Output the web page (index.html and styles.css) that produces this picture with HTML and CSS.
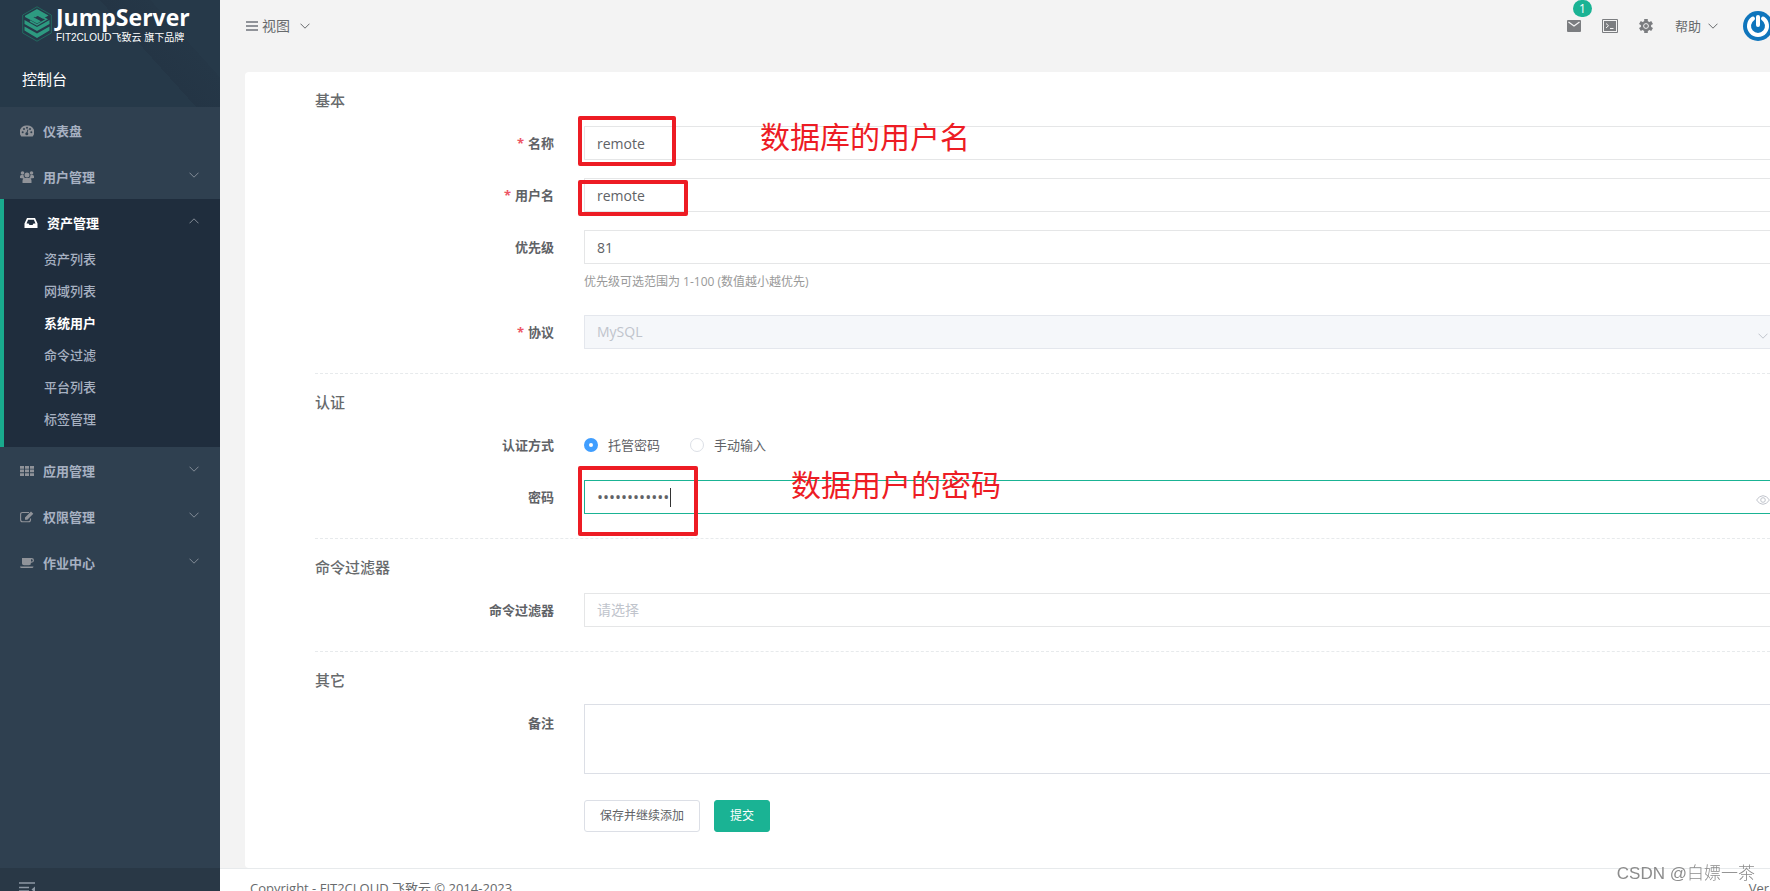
FILE: index.html
```
<!DOCTYPE html>
<html lang="zh-CN">
<head>
<meta charset="utf-8">
<title>JumpServer</title>
<link rel="stylesheet" href="styles.css">
</head>
<body>
<svg class="symbols" aria-hidden="true">
  <symbol id="chevron-down" viewBox="0 0 10 6"><path d="M.5 .7 5 5.2 9.5 .7" fill="none" stroke="currentColor"/></symbol>
  <symbol id="chevron-up" viewBox="0 0 10 6"><path d="M.5 5.3 5 .8 9.5 5.3" fill="none" stroke="currentColor"/></symbol>
</svg>
<div class="app">
  <aside class="sidebar">
    <header class="brand">
      <a class="logo" href="#">
        <svg class="logo-mark" viewBox="0 0 30 36">
          <path d="M15 .8 29.3 9v18L15 35.200 .7 27V9z" fill="none" stroke="#22695f"/>
          <path d="M15 3 26.500 9.500 21 12.700 15 9.400 11.500 11.300 19 15.300 15 17.600 3 11v-1.300z" fill="#2d9a80"/>
          <path d="M12.500 10.800 16 8.800 24.500 13.300 15 18.800 8 15" fill="none" stroke="#2d9a80" stroke-width="1.500"/>
          <path d="M2.500 14 15 21 27.500 14v4L15 25 2.500 18zM2.500 20.500 15 27.500 27.500 20.500v4L15 32 2.500 24.500z" fill="#2d9a80"/>
        </svg>
        <span class="logo-text">
          <strong class="logo-name">JumpServer</strong>
          <span class="logo-sub">FIT2CLOUD飞致云 旗下品牌</span>
        </span>
      </a>
      <div class="console">控制台</div>
    </header>
    <nav class="menu">
      <a class="item" href="#">
        <svg class="item-icon" viewBox="0 0 14 12"><path d="M7 .5A6.700 6.700 0 0 0 1.300 11.500h11.400A6.700 6.700 0 0 0 7 .5z" fill="currentColor"/><g fill="#2f4050"><circle cx="2.700" cy="7.300" r="1"/><circle cx="4" cy="4" r="1"/><circle cx="7" cy="2.700" r="1"/><circle cx="10" cy="4" r="1"/><circle cx="11.300" cy="7.300" r="1"/><circle cx="6.800" cy="8.700" r="1.500"/></g><path d="M6.800 8.500 7.900 4.500" stroke="#2f4050"/></svg>
        <span>仪表盘</span>
      </a>
      <a class="item" href="#">
        <svg class="item-icon" viewBox="0 0 14 12"><g fill="currentColor"><circle cx="2.500" cy="2" r="1.800"/><circle cx="11.500" cy="2" r="1.800"/><circle cx="7" cy="4" r="2.500"/><path d="M0 7V5.500Q0 4 1.300 4h2.200Q3.600 6 4.700 6.800L3.500 7.500zM14 7V5.500Q14 4 12.700 4h-2.200Q10.400 6 9.300 6.800l1.200.7zM2.500 12V9.500Q2.500 7 4.500 7h5q2 0 2 2.500V12z"/></g></svg>
        <span>用户管理</span>
        <svg class="arrow"><use href="#chevron-down"/></svg>
      </a>
      <div class="group">
        <a class="item item-open" href="#">
          <svg class="item-icon" viewBox="0 0 14 12"><path d="M3 1h8l2.500 5.500V11H.5V6.500zM4.100 2.800 2.500 6.500h2L5.500 8h3l1-1.500h2L9.900 2.800z" fill="currentColor" fill-rule="evenodd"/></svg>
          <span>资产管理</span>
          <svg class="arrow"><use href="#chevron-up"/></svg>
        </a>
        <div class="submenu">
          <a href="#">资产列表</a>
          <a href="#">网域列表</a>
          <a class="current" href="#">系统用户</a>
          <a href="#">命令过滤</a>
          <a href="#">平台列表</a>
          <a href="#">标签管理</a>
        </div>
      </div>
      <a class="item" href="#">
        <svg class="item-icon" viewBox="0 0 14 12"><path d="M0 1h4v2.700H0zM5 1h4v2.700H5zM10 1h4v2.700h-4zM0 4.600h4v2.700H0zM5 4.600h4v2.700H5zM10 4.600h4v2.700h-4zM0 8.200h4v2.700H0zM5 8.200h4v2.700H5zM10 8.200h4v2.700h-4z" fill="currentColor"/></svg>
        <span>应用管理</span>
        <svg class="arrow"><use href="#chevron-down"/></svg>
      </a>
      <a class="item" href="#">
        <svg class="item-icon" viewBox="0 0 14 12"><path d="M9 1.500H2.500Q.6 1.500.6 3.500v5.200q0 2 1.900 2h6q2 0 2-2V7.500" fill="none" stroke="currentColor" stroke-width="1.100"/><path d="M5 8.800V6.500L11 .6l2.300 2.200-6 6zM5.900 7l1 1" fill="currentColor"/></svg>
        <span>权限管理</span>
        <svg class="arrow"><use href="#chevron-down"/></svg>
      </a>
      <a class="item" href="#">
        <svg class="item-icon" viewBox="0 0 14 12"><path d="M2 1h9.500Q14 1 14 3.300T11.500 5.800H11Q11 8.300 9 8.300H4Q2 8.300 2 6.500zM11 2.200v2.400Q12.800 4.700 12.800 3.400T11 2.200zM0 9.500h13.500Q13.300 11 12 11H1.500Q.2 11 0 9.500z" fill="currentColor" fill-rule="evenodd"/></svg>
        <span>作业中心</span>
        <svg class="arrow"><use href="#chevron-down"/></svg>
      </a>
    </nav>
    <button class="collapse" type="button" aria-label="收起菜单">
      <svg viewBox="0 0 16 13"><path d="M0 1h16M0 5.500h10M0 9h10M0 12.300h16" stroke="currentColor" stroke-width="1.600"/><path d="M16 4.500v6l-3.500-3z" fill="currentColor"/></svg>
    </button>
  </aside>

  <main class="main">
    <header class="topbar">
      <button class="view-switch" type="button">
        <svg class="bars" viewBox="0 0 12 10"><path d="M0 1h12M0 5h12M0 9h12" stroke="#909399" stroke-width="2"/></svg>
        <span>视图</span>
        <svg class="arrow"><use href="#chevron-down"/></svg>
      </button>
      <div class="tools">
        <button class="tool mail" type="button" aria-label="消息">
          <svg width="14" height="12" viewBox="0 0 14 12"><rect width="14" height="12" rx="1" fill="#7b7d80"/><path d="M1.500 2 7 6 12.500 2" fill="none" stroke="#f3f3f3" stroke-width="1.300"/></svg>
          <span class="badge">1</span>
        </button>
        <button class="tool" type="button" aria-label="终端">
          <svg width="16" height="14" viewBox="0 0 16 14"><path d="M.5 .5h15v13H.5z" fill="none" stroke="#7b7d80"/><path d="M2 2h12v10H2z" fill="#7b7d80"/><path d="M4 4.500 6.500 6.700 4 9M8 9.500h3.500" fill="none" stroke="#f3f3f3"/></svg>
        </button>
        <button class="tool gear" type="button" aria-label="设置">
          <svg width="14" height="14" viewBox="0 0 14 14"><g stroke="#7b7d80" stroke-width="3.600"><path d="M7 0v14M.9 3.500l12.200 7M.9 10.500l12.200-7"/></g><circle cx="7" cy="7" r="5.200" fill="#7b7d80"/><circle cx="7" cy="7" r="2.400" fill="none" stroke="#f3f3f3"/></svg>
        </button>
        <button class="tool help" type="button"><span>帮助</span><svg class="arrow"><use href="#chevron-down"/></svg></button>
        <a class="avatar" href="#" aria-label="用户">
          <svg viewBox="0 0 30 30"><circle cx="15" cy="15" r="15" fill="#0f75bc"/><path d="M10 7.500A9 9 0 1 0 20 7.500" fill="none" stroke="#fff" stroke-width="4" stroke-linecap="round"/><path d="M15 6v8" stroke="#fff" stroke-width="4" stroke-linecap="round"/></svg>
        </a>
      </div>
    </header>

    <form class="panel">
      <section class="section">
        <h3>基本</h3>
        <div class="row">
          <label class="required" for="name">名称</label>
          <div class="field"><input class="control" id="name" type="text" value="remote">
            <span class="mark mark-name"></span><span class="note note-name">数据库的用户名</span></div>
        </div>
        <div class="row">
          <label class="required" for="username">用户名</label>
          <div class="field"><input class="control" id="username" type="text" value="remote"><span class="mark mark-user"></span></div>
        </div>
        <div class="row">
          <label for="priority">优先级</label>
          <div class="field"><input class="control" id="priority" type="text" value="81">
            <p class="hint">优先级可选范围为 1-100 (数值越小越优先)</p></div>
        </div>
        <div class="row">
          <label class="required" for="protocol">协议</label>
          <div class="field"><select class="control" id="protocol" disabled><option>MySQL</option></select>
            <svg class="suffix suffix-arrow"><use href="#chevron-down"/></svg></div>
        </div>
      </section>
      <section class="section">
        <h3>认证</h3>
        <div class="row" role="radiogroup" aria-labelledby="auth-label">
          <span class="label" id="auth-label">认证方式</span>
          <div class="field radios">
            <label class="radio"><input type="radio" name="auth" checked><span>托管密码</span></label>
            <label class="radio"><input type="radio" name="auth"><span>手动输入</span></label>
          </div>
        </div>
        <div class="row">
          <label for="password">密码</label>
          <div class="field"><input class="control active" id="password" type="password" value="remote123456">
            <span class="caret"></span>
            <svg class="suffix suffix-eye" viewBox="0 0 14 10"><path d="M.6 5Q3.200 .7 7 .7T13.400 5Q10.800 9.300 7 9.300T.6 5z" fill="none" stroke="currentColor"/><circle cx="7" cy="5" r="2.300" fill="none" stroke="currentColor"/></svg>
            <span class="mark mark-password"></span><span class="note note-password">数据用户的密码</span></div>
        </div>
      </section>
      <section class="section">
        <h3>命令过滤器</h3>
        <div class="row">
          <label for="filter">命令过滤器</label>
          <div class="field"><select class="control empty" id="filter"><option>请选择</option></select></div>
        </div>
      </section>
      <section class="section last">
        <h3>其它</h3>
        <div class="row">
          <label for="comment">备注</label>
          <div class="field"><textarea class="control" id="comment"></textarea></div>
        </div>
        <div class="actions">
          <button class="btn" type="button">保存并继续添加</button>
          <button class="btn btn-primary" type="submit">提交</button>
        </div>
      </section>
    </form>

    <footer class="footer"><span>Copyright - FIT2CLOUD 飞致云 © 2014-2023</span><span>Ver</span></footer>
  </main>
</div>
<div class="watermark">CSDN @白嫖一茶</div>
</body>
</html>
```
FILE: styles.css
```
* { box-sizing: border-box; }
html, body { height: 100%; }
body {
  margin: 0;
  overflow: hidden;
  background: #f3f3f3;
  color: #676a6c;
  font: 13px/20px "Open Sans", "Noto Sans CJK SC", sans-serif;
}
a { color: inherit; text-decoration: none; }
button { padding: 0; border: 0; background: none; color: inherit; font: inherit; }
svg { display: block; flex: none; }
.symbols { position: absolute; width: 0; height: 0; }
.arrow { width: 10px; height: 6px; }

.app { display: grid; grid-template-columns: 220px minmax(0, 1fr); min-height: 100vh; }

/* Sidebar */
.sidebar { display: flex; flex-direction: column; background: #2f4050; color: #a7b1c2; }
.brand {
  height: 107px;
  background: linear-gradient(48deg, #263949 62%, #243545 62%, #253747 78%, #263949 78%);
  color: #fff;
}
.logo { display: flex; gap: 4px; height: 48px; padding: 6px 0 0 22px; }
.logo-mark { width: 30px; height: 36px; }
.logo-text { display: flex; flex-direction: column; }
.logo-name { font-size: 23px; line-height: 23px; }
.logo-sub { font: 10px/17px "Liberation Sans", "Noto Sans CJK SC", sans-serif; white-space: nowrap; }
.console { padding: 19px 22px; font-size: 15px; line-height: 24px; }
.item { display: flex; align-items: center; height: 46px; padding: 2px 21px 0 20px; font-weight: 600; }
.item-icon { width: 14px; height: 12px; margin-right: 9px; color: #909399; }
.item .arrow { margin: 0 0 4px auto; color: #838b96; }
.group { padding-bottom: 12px; border-left: 4px solid #19aa8d; background: #1f2d3d; }
.item-open { height: 44px; padding-top: 4px; color: #fff; }
.item-open .item-icon { color: #fff; }
.submenu { display: flex; flex-direction: column; padding-left: 40px; font-weight: 500; line-height: 32px; }
.submenu .current { color: #fff; font-weight: 700; }
.collapse { display: flex; height: 41px; margin-top: auto; padding: 14px 19px; background: #293846; color: #8d98a5; }
.collapse svg { width: 16px; height: 13px; }

/* Top bar */
.main { min-width: 0; }
.topbar { display: flex; align-items: center; justify-content: space-between; height: 52px; margin-bottom: 20px; padding-left: 26px; }
.view-switch { display: flex; align-items: center; gap: 4px; font-size: 14px; }
.bars { width: 12px; height: 10px; }
.view-switch .arrow { margin-left: 6px; }
.tools { display: flex; align-items: center; gap: 21px; }
.tool { position: relative; display: flex; align-items: center; gap: 7px; }
.help { margin-right: 4px; }
.gear { margin-right: 1px; }
.badge {
  position: absolute;
  left: 6px;
  bottom: 15px;
  width: 19px;
  height: 17px;
  border-radius: 9px;
  background: #1ab394;
  color: #fff;
  font-size: 12px;
  line-height: 17px;
  text-align: center;
}
.avatar { width: 30px; height: 30px; margin-right: -3px; }

/* Form */
.panel { margin-left: 25px; padding: 0 0 36px 70px; border-radius: 4px 0 0 4px; background: #fff; }
.section { padding: 16px 0 24px; border-bottom: 1px dashed #e7eaec; }
.section.last { padding-bottom: 0; border-bottom: 0; }
h3 { margin: 0 0 14px; font-size: 15px; font-weight: 500; line-height: 24px; }
.last h3 { margin-bottom: 12px; }
.row { display: grid; grid-template-columns: 239px minmax(0, 1fr); column-gap: 30px; }
.row + .row { margin-top: 18px; }
.row > label, .label { color: #606266; font-weight: 700; line-height: 34px; height: 34px; text-align: right; }
.last .row > label { line-height: 38px; }
.required::before { content: "*"; margin-right: 4px; color: #ed5565; }
.field { position: relative; }
.control {
  display: block;
  width: 100%;
  height: 34px;
  padding: 0 12px;
  border: 1px solid #e5e6e7;
  border-right: 0;
  border-radius: 1px 0 0 1px;
  outline: 0;
  background: #fff;
  color: #606266;
  font: inherit;
  font-size: 14px;
  appearance: none;
}
select:disabled { border-color: #e4e7ed; background: #f5f7fa; color: #c0c4cc; opacity: 1; }
.empty { color: #c0c4cc; }
.active { border-color: #1ab394; font-size: 16px; }
textarea.control { height: 70px; border-color: #dcdfe6; resize: none; }
.hint { margin: 7px 0 4px; color: #999; font-size: 12px; line-height: 22px; }
.suffix { position: absolute; color: #c0c4cc; }
.suffix-arrow { top: 18px; right: 2px; width: 10px; height: 6px; }
.suffix-eye { top: 15px; right: 0; width: 14px; height: 10px; }
.caret { position: absolute; top: 8px; left: 86px; width: 1px; height: 19px; background: #333; }
.radios { display: flex; gap: 30px; align-items: center; }
.radio { display: flex; align-items: center; gap: 10px; color: #606266; }
.radio input { width: 14px; height: 14px; margin: 0; border: 1px solid #dcdfe6; border-radius: 50%; background: #fff; appearance: none; }
.radio input:checked { border: 5px solid #409eff; }
.actions { display: flex; gap: 14px; margin-top: 26px; padding-left: 269px; }
.btn { height: 32px; padding: 0 15px; border: 1px solid #dcdfe6; border-radius: 3px; background: #fff; color: #606266; font-size: 12px; }
.btn-primary { border-color: #1ab394; background: #1ab394; color: #fff; }

/* Callouts over the fields */
.mark { position: absolute; left: -6px; border: 4px solid #ed1c24; border-radius: 2px; pointer-events: none; }
.mark-name { top: -10px; width: 98px; height: 50px; }
.mark-user { top: 2px; width: 110px; height: 36px; }
.mark-password { top: -14px; width: 120px; height: 70px; }
.note { position: absolute; color: #ed1c24; font-size: 30px; line-height: 40px; white-space: nowrap; }
.note-name { top: -9px; left: 176px; }
.note-password { top: -15px; left: 207px; }

.footer { display: flex; justify-content: space-between; padding: 0 1px 2px 30px; border-top: 1px solid #e7eaec; background: #fff; line-height: 38px; }
.watermark { position: fixed; right: 15px; bottom: 5px; color: #8c8c8c; font: 300 17px/24px "Liberation Sans", "Noto Sans CJK SC", sans-serif; }
```
